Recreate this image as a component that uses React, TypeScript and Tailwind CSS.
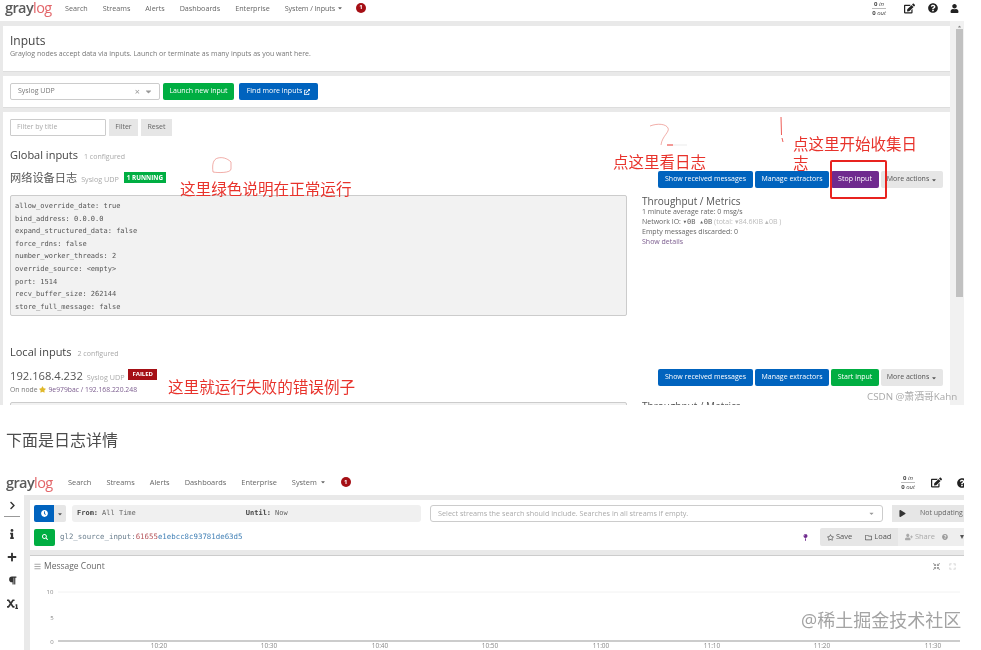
import React from "react";
import {
  FaEdit,
  FaQuestionCircle,
  FaUser,
  FaExternalLinkAlt,
  FaClock,
  FaSearch,
  FaPlay,
  FaStar,
  FaRegStar,
  FaRegFolder,
  FaUserPlus,
  FaParagraph,
  FaSubscript,
  FaInfo,
  FaPlus,
  FaChevronRight,
  FaBars,
  FaMapPin,
  FaCompressArrowsAlt,
  FaExpand,
  FaCaretDown,
  FaCaretUp,
} from "react-icons/fa";

const sans = "font-['Open_Sans','Noto_Sans_CJK_SC',sans-serif]";
const mono = "font-['DejaVu_Sans_Mono','Liberation_Mono',monospace]";

const globalConfig = [
  "allow_override_date: true",
  "bind_address: 0.0.0.0",
  "expand_structured_data: false",
  "force_rdns: false",
  "number_worker_threads: 2",
  "override_source: <empty>",
  "port: 1514",
  "recv_buffer_size: 262144",
  "store_full_message: false",
];

const ticks = [
  { x: 129, label: "10:20" },
  { x: 239, label: "10:30" },
  { x: 350, label: "10:40" },
  { x: 460, label: "10:50" },
  { x: 571, label: "11:00" },
  { x: 682, label: "11:10" },
  { x: 792, label: "11:20" },
  { x: 903, label: "11:30" },
];

const Logo = () => (
  <span className="text-[14.5px] leading-[14px] tracking-[-0.6px] font-semibold">
    <span className="text-[#5a5a5a]">gray</span>
    <span className="text-[#e3666a] font-normal">log</span>
  </span>
);

const Badge = ({ n }: { n: string }) => (
  <span className="w-[10px] h-[10px] rounded-full bg-[#a50f15] text-white text-[6px] font-bold flex items-center justify-center">
    {n}
  </span>
);

const Throughput = () => (
  <div className="flex flex-col items-center leading-none">
    <span className="text-[6px] text-[#444] pb-[1px]"><b>0</b> <i>in</i></span>
    <span className="text-[6px] text-[#444] border-t border-[#bbb] pt-[1px]"><b>0</b> <i>out</i></span>
  </div>
);

const ActionButtons = ({ label, color }: { label: string; color: string }) => (
  <div className="flex gap-[2px] text-[7px] text-white h-[17px] items-stretch">
    <div className="w-[95px] bg-[#0063be] rounded-[2px] flex items-center justify-center">Show received messages</div>
    <div className="w-[74px] bg-[#0063be] rounded-[2px] flex items-center justify-center">Manage extractors</div>
    <div className={`w-[48px] ${color} rounded-[2px] flex items-center justify-center`}>{label}</div>
    <div className="w-[62px] bg-[#e6e6e6] text-[#555] rounded-[2px] flex items-center justify-center gap-[2px]">
      More actions <FaCaretDown size={6} />
    </div>
  </div>
);

const TopShot = () => (
  <div className="relative w-[964px] h-[405px] overflow-hidden">
    <div className="h-[21px] pb-[5px] bg-white flex items-center text-[7.2px] text-[#666]">
      <div className="w-[65px] pl-[5px] flex items-center"><Logo /></div>
      <div className="flex items-center gap-[15px]">
        <span>Search</span>
        <span>Streams</span>
        <span>Alerts</span>
        <span>Dashboards</span>
        <span>Enterprise</span>
        <span className="flex items-center gap-[2px] tracking-[-0.1px]">System / Inputs <FaCaretDown size={6} /></span>
        <span className="-ml-[2px]"><Badge n="1" /></span>
      </div>
      <div className="ml-auto flex items-center text-[#222]">
        <Throughput />
        <FaEdit size={11} className="ml-[18px]" />
        <FaQuestionCircle size={10} className="ml-[13px]" />
        <FaUser size={9} className="ml-[12px] mr-[5px]" />
      </div>
    </div>

    <div className="flex h-[384px] bg-[#e9e9e9] pt-[5px] pl-[3px]">
      <div className="w-[947px] flex flex-col gap-[4px]">
        <div className="h-[46px] shrink-0 bg-white pl-[7px] pt-[7px] border-b border-[#ddd]">
          <h1 className="text-[12px] leading-[16px] text-[#444]">Inputs</h1>
          <p className="text-[7px] leading-[10px] text-[#777]">
            Graylog nodes accept data via inputs. Launch or terminate as many inputs as you want here.
          </p>
        </div>
        <div className="h-[32px] shrink-0 bg-white pl-[7px] flex items-center gap-[3px] text-[7px] border-b border-[#ddd]">
          <div className="w-[150px] h-[17px] border border-[#ccc] rounded-[2px] flex items-center pl-[7px] pr-[6px] text-[#777]">
            Syslog UDP
            <span className="ml-auto text-[#999] text-[9px]">×</span>
            <FaCaretDown size={9} className="ml-[4px] text-[#999]" />
          </div>
          <div className="w-[71px] h-[17px] bg-[#00ae42] rounded-[2px] text-white flex items-center justify-center">Launch new input</div>
          <div className="ml-[2px] w-[79px] h-[17px] bg-[#0063be] rounded-[2px] text-white flex items-center justify-center gap-[2px]">
            Find more inputs <FaExternalLinkAlt size={6} />
          </div>
        </div>
        <div className="flex-1 min-h-0 overflow-hidden bg-white pl-[7px] pr-[7px] pt-[7px]">
          <div className="flex items-center gap-[3px] text-[7px] text-[#777]">
            <div className="w-[96px] h-[17px] border border-[#ccc] rounded-[1px] flex items-center pl-[6px] text-[#aaa]">Filter by title</div>
            <div className="w-[29px] h-[17px] bg-[#e6e6e6] flex items-center justify-center text-[#666]">Filter</div>
            <div className="w-[31px] h-[17px] bg-[#e6e6e6] flex items-center justify-center text-[#666]">Reset</div>
          </div>

          <div className="mt-[11px] flex items-baseline gap-[6px]">
            <h2 className="text-[11px] leading-[16px] text-[#444]">Global inputs</h2>
            <span className="text-[7px] text-[#aaa]">1 configured</span>
          </div>

          <div className="mt-[4px] flex items-start justify-between">
            <div className="flex items-start gap-[4px]">
              <span className="text-[11.2px] leading-[16px] text-[#555] mt-[3px]">网络设备日志</span>
              <span className="text-[7.2px] leading-[16px] text-[#aaa] mt-[4px]">Syslog UDP</span>
              <span className="ml-[1px] mt-[5px] h-[11px] px-[3px] bg-[#00ae42] text-white text-[6.3px] font-bold flex items-center">1 RUNNING</span>
            </div>
            <div className="mt-[4px]"><ActionButtons label="Stop input" color="bg-[#6f2a8e]" /></div>
          </div>

          <div className="mt-[7px] flex gap-[15px]">
            <pre className={`w-[617px] h-[121px] bg-[#f2f2f2] border border-[#ccc] rounded-[2px] pl-[4px] pt-[4px] ${mono} text-[7px] leading-[12.6px] text-[#555]`}>
              {globalConfig.join("\n")}
            </pre>
            <div className="text-[7px] leading-[10px] text-[#666]">
              <h3 className="text-[10px] leading-[12px] text-[#555]">Throughput / Metrics</h3>
              <div>1 minute average rate: 0 msg/s</div>
              <div>Network IO: <span className={mono}>▾0B ▴0B</span> <span className="text-[#bbb]">(total: ▾84.6KiB ▴0B )</span></div>
              <div>Empty messages discarded: 0</div>
              <div className="text-[#7b5c8e]">Show details</div>
            </div>
          </div>

          <div className="mt-[28px] flex items-baseline gap-[6px]">
            <h2 className="text-[11px] leading-[16px] text-[#444]">Local inputs</h2>
            <span className="text-[7px] text-[#aaa]">2 configured</span>
          </div>

          <div className="mt-[6px] flex items-start justify-between">
            <div>
              <div className="flex items-start gap-[4px]">
                <span className="text-[11.2px] leading-[16px] text-[#555] mt-[2px]">192.168.4.232</span>
                <span className="text-[7.2px] leading-[16px] text-[#aaa] mt-[3px]">Syslog UDP</span>
                <span className="mt-[3px] h-[11px] px-[4px] bg-[#a50f15] text-white text-[6px] font-bold flex items-center">FAILED</span>
              </div>
              <div className="text-[6.8px] leading-[9px] text-[#777] flex items-center gap-[2px]">
                On node <FaStar size={7} className="text-[#e0b82a]" />
                <span className="text-[#7b5c8e]">9e979bac / 192.168.220.248</span>
              </div>
            </div>
            <div className="mt-[3px]"><ActionButtons label="Start input" color="bg-[#00ae42]" /></div>
          </div>

          <div className="mt-[8px] flex gap-[15px]">
            <div className="w-[617px] h-[20px] bg-[#f2f2f2] border border-[#ccc] rounded-[2px]" />
            <h3 className="text-[10px] leading-[12px] text-[#555] -mt-[2px]">Throughput / Metrics</h3>
          </div>
        </div>
      </div>
      <div className="relative w-[14px] bg-[#f1f1f1] -mt-[5px] flex justify-end">
        <FaCaretUp size={5} className="absolute right-[2px] top-[3px] text-[#888]" />
        <div className="w-[7px] h-[268px] mt-[8px] mr-[1px] bg-[#c1c1c1]" />
      </div>
    </div>

    {/* hand-drawn notes over the shot */}
    <span className={`absolute left-[180px] top-[180px] text-[15.6px] leading-[18px] text-[#e8332c] whitespace-nowrap ${sans}`}>这里绿色说明在正常运行</span>
    <span className={`absolute left-[613px] top-[153px] text-[15.5px] leading-[18px] text-[#e8332c] whitespace-nowrap ${sans}`}>点这里看日志</span>
    <div className={`absolute left-[793px] top-[135px] w-[126px] text-[15.5px] leading-[19px] text-[#e8332c] ${sans}`}>点这里开始收集日志</div>
    <div className="absolute left-[830px] top-[160px] w-[57px] h-[39px] border-2 border-[#e8231f] rounded-[2px]" />
    <span className={`absolute left-[168px] top-[378px] text-[15.6px] leading-[18px] text-[#e8332c] whitespace-nowrap ${sans}`}>这里就运行失败的错误例子</span>
    <svg className="absolute left-[210px] top-[155px]" width="24" height="20" fill="none" stroke="#e8776f" strokeWidth="0.6">
      <path d="M3 17 C2 10 3 4 8 3 C12 2 17 3 21 7 L21 14 C21 18 8 18 3 17" />
    </svg>
    <svg className="absolute left-[640px] top-[120px]" width="70" height="30" fill="none" stroke="#e8776f" strokeWidth="0.6">
      <path d="M10 6 C18 3 26 4 28 8 C30 12 22 16 21 25" />
      <path d="M27 25 L33 25" stroke="#e8332c" strokeWidth="1" />
      <path d="M33 25 L47 25" stroke="#ddd" />
    </svg>
    <svg className="absolute left-[778px] top-[115px]" width="8" height="28" fill="none" stroke="#e8332c" strokeWidth="0.8">
      <path d="M3 2 L3.5 20 M4 23 L5 27" />
    </svg>
    <span className={`absolute left-[867px] top-[390px] text-[9.8px] leading-[14px] text-[#a9a9a9] whitespace-nowrap ${sans}`}>CSDN @萧洒哥Kahn</span>
  </div>
);

const BottomShot = () => (
  <div className="relative w-[964px] h-[185px] overflow-hidden">
    <div className="h-[30px] pt-[5px] bg-white flex items-center text-[7.4px] text-[#666]">
      <div className="w-[68px] pl-[6px] flex items-center"><Logo /></div>
      <div className="flex items-center gap-[15px]">
        <span>Search</span>
        <span>Streams</span>
        <span>Alerts</span>
        <span>Dashboards</span>
        <span>Enterprise</span>
        <span className="flex items-center gap-[3px]">System <FaCaretDown size={6} /></span>
        <Badge n="1" />
      </div>
      <div className="ml-auto flex items-center text-[#222]">
        <Throughput />
        <FaEdit size={11} className="ml-[16px]" />
        <FaQuestionCircle size={10} className="ml-[15px] -mr-[3px]" />
      </div>
    </div>

    <div className="flex h-[155px]">
      <div className="w-[24px] bg-white flex flex-col items-center text-[#333] pt-[6px]">
        <FaChevronRight size={9} />
        <div className="w-[16px] border-t border-[#999] mt-[6px] mb-[12px]" />
        <FaInfo size={10} />
        <FaPlus size={10} className="mt-[13px]" />
        <FaParagraph size={9} className="mt-[14px]" />
        <FaSubscript size={11} className="mt-[13px]" />
      </div>
      <div className="flex-1 bg-[#e9e9e9] pl-[6px] pt-[5px] flex flex-col gap-[5px]">
        <div className="h-[50px] shrink-0 bg-white pl-[4px] pt-[5px] flex flex-col gap-[6px] text-[7px]">
          <div className="flex items-center h-[17px]">
            <div className="w-[20px] h-[17px] bg-[#0063be] rounded-l-[2px] text-white flex items-center justify-center"><FaClock size={7} /></div>
            <div className="w-[12px] h-[17px] bg-[#e6e6e6] rounded-r-[2px] text-[#555] flex items-center justify-center"><FaCaretDown size={6} /></div>
            <div className={`ml-[6px] w-[349px] h-[17px] bg-[#f0f0f0] rounded-[3px] flex items-center pl-[5px] ${mono} text-[7px] text-[#666]`}>
              <b className="text-[#444]">From:</b><span className="ml-[4px]">All Time</span>
              <b className="text-[#444] ml-[110px]">Until:</b><span className="ml-[4px]">Now</span>
            </div>
            <div className="ml-[9px] w-[453px] h-[17px] border border-[#ccc] rounded-[3px] flex items-center pl-[7px] pr-[7px] text-[7.25px] text-[#aaa]">
              Select streams the search should include. Searches in all streams if empty.
              <FaCaretDown size={7} className="ml-auto text-[#999]" />
            </div>
            <div className="ml-[9px] flex-1 h-[17px] bg-[#e6e6e6] flex items-center pl-[7px] text-[#666] whitespace-nowrap overflow-hidden">
              <FaPlay size={7} className="text-[#333] shrink-0" />
              <span className="ml-[14px]">Not updating</span>
            </div>
          </div>
          <div className="flex items-center h-[18px]">
            <div className="w-[21px] h-[17px] bg-[#00ae42] rounded-[2px] text-white flex items-center justify-center"><FaSearch size={6} /></div>
            <div className={`ml-[5px] ${mono} text-[7.4px] text-[#6b7f8e]`}>
              gl2_source_input:<span className="text-[#b5545a]">61655</span><span className="text-[#3f7fb5]">e1ebcc8c93781de63d5</span>
            </div>
            <FaMapPin size={7} className="ml-auto text-[#6f2a8e]" />
            <div className="ml-[11px] w-[78px] h-[18px] bg-[#e6e6e6] rounded-l-[2px] flex items-center pl-[7px] text-[7.5px] text-[#555] whitespace-nowrap">
              <FaRegStar size={7} />
              <span className="ml-[2px]">Save</span>
              <FaRegFolder size={7} className="ml-[13px]" />
              <span className="ml-[2px]">Load</span>
            </div>
            <div className="w-[66px] h-[18px] bg-[#eeeeee] flex items-center pl-[7px] text-[7.5px] text-[#aaa] whitespace-nowrap overflow-hidden">
              <FaUserPlus size={8} />
              <span className="ml-[2px]">Share</span>
              <FaQuestionCircle size={6} className="ml-[7px] text-[#999]" />
              <span className="ml-[12px] text-[#555]">▾</span>
            </div>
          </div>
        </div>
        <div className="flex-1 bg-white border-t border-[#ccc] pl-[4px]">
          <div className="flex items-center h-[20px] text-[8.5px] text-[#666]">
            <FaBars size={7} className="text-[#aaa] mr-[3px]" />
            Message Count
            <div className="ml-auto flex items-center gap-[9px] pr-[8px] text-[#999]">
              <FaCompressArrowsAlt size={7} />
              <FaExpand size={7} className="text-[#ccc]" />
            </div>
          </div>
          <svg width="930" height="76" className="-ml-[4px]">
            <line x1="28" y1="16" x2="930" y2="16" stroke="#f2f2f2" />
            <line x1="28" y1="65" x2="930" y2="65" stroke="#999" />
            <text x="20" y="18" fontSize="6" fill="#888" textAnchor="middle">10</text>
            <text x="22" y="44" fontSize="6" fill="#888" textAnchor="middle">5</text>
            <text x="22" y="68" fontSize="6" fill="#888" textAnchor="middle">0</text>
            {ticks.map((t) => (
              <text key={t.label} x={t.x} y="72" fontSize="6.5" fill="#888" textAnchor="middle">{t.label}</text>
            ))}
          </svg>
        </div>
      </div>
    </div>

    <span className={`absolute left-[801px] top-[143px] text-[18px] leading-[24px] text-[#a3a3a3] whitespace-nowrap ${sans}`}>@稀土掘金技术社区</span>
  </div>
);

export default function App() {
  return (
    <div className={`w-[981px] h-[650px] bg-white overflow-hidden blur-[0.35px] ${sans}`}>
      <TopShot />
      <div className="h-[60px] pl-[6px] pt-[25px] text-[16px] leading-[20px] text-[#4d4d4d]">下面是日志详情</div>
      <BottomShot />
    </div>
  );
}
